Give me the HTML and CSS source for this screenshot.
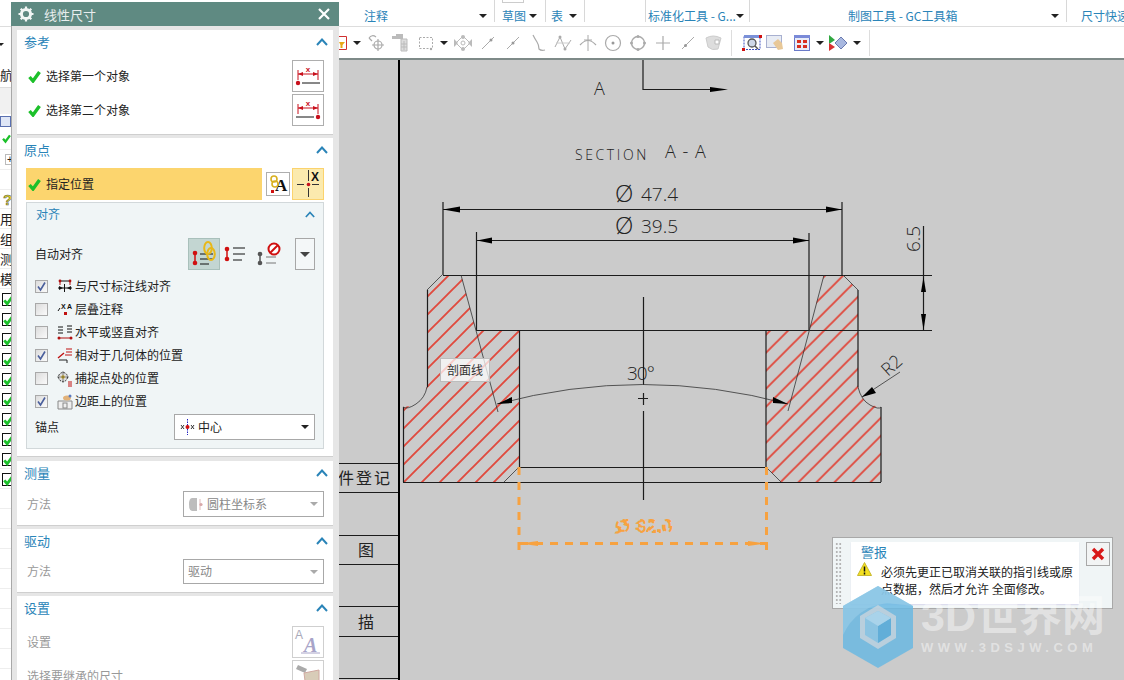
FILE: index.html
```html
<!DOCTYPE html>
<html lang="zh">
<head>
<meta charset="utf-8">
<title>线性尺寸</title>
<link rel="stylesheet" href="styles.css">
</head>
<body>
<svg class="defs" aria-hidden="true">
  <symbol id="ok" viewBox="0 0 13 13"><path d="M1.5 7 L5 11 L11.5 2" fill="none" stroke="#1cc02a" stroke-width="3.4"/></symbol>
  <symbol id="chev" viewBox="0 0 12 8"><path d="M1 7 L6 1.5 L11 7" fill="none" stroke="#2a84b8" stroke-width="2"/></symbol>
  <symbol id="tick" viewBox="0 0 13 13"><path d="M3 6.5 L5.5 10 L10 2.5" fill="none" stroke="#4a5f9c" stroke-width="1.6"/></symbol>
  <pattern id="hatchL" width="18" height="18" patternUnits="userSpaceOnUse" patternTransform="translate(4 0)"><path d="M-2 2L2 -2M0 18L18 0M16 20L20 16" stroke="#e04a3e" stroke-width="1.9"/></pattern>
  <pattern id="hatchR" width="18" height="18" patternUnits="userSpaceOnUse" patternTransform="translate(2.7 0)"><path d="M-2 2L2 -2M0 18L18 0M16 20L20 16" stroke="#e04a3e" stroke-width="1.9"/></pattern>
</svg>
<div class="app">
  <nav class="nav">
    <div class="n n-top"></div>
    <div class="n n-drop"><i class="n-arrow"></i><i class="n-sep"></i></div>
    <div class="n n-text n-27">航</div>
    <div class="n n-grey"></div>
    <div class="n n-blue"><i class="n-bluebox"></i></div>
    <div class="n n-22"><svg class="n-c" width="10" height="13"><use href="#ok"/></svg></div>
    <div class="n n-20"><span class="n-plus">+</span></div>
    <div class="n n-20"></div>
    <div class="n n-19"><span class="n-q">?</span></div>
    <div class="n n-text n-20">用</div>
    <div class="n n-text n-20">组</div>
    <div class="n n-text n-20">测</div>
    <div class="n n-text n-20">模</div>
    <div class="n n-20 n-chk"><span class="n-box"><svg width="11" height="12"><use href="#ok"/></svg></span></div>
    <div class="n n-20 n-chk"><span class="n-box"><svg width="11" height="12"><use href="#ok"/></svg></span></div>
    <div class="n n-20 n-chk"><span class="n-box"><svg width="11" height="12"><use href="#ok"/></svg></span></div>
    <div class="n n-20 n-chk"><span class="n-box"><svg width="11" height="12"><use href="#ok"/></svg></span></div>
    <div class="n n-20 n-chk"><span class="n-box"><svg width="11" height="12"><use href="#ok"/></svg></span></div>
    <div class="n n-20 n-chk"><span class="n-box"><svg width="11" height="12"><use href="#ok"/></svg></span></div>
    <div class="n n-20 n-chk"><span class="n-box"><svg width="11" height="12"><use href="#ok"/></svg></span></div>
    <div class="n n-20 n-chk"><span class="n-box"><svg width="11" height="12"><use href="#ok"/></svg></span></div>
    <div class="n n-20 n-chk"><span class="n-box"><svg width="11" height="12"><use href="#ok"/></svg></span></div>
    <div class="n n-20 n-chk"><span class="n-box"><svg width="11" height="12"><use href="#ok"/></svg></span></div>
    <div class="n n-20"></div><div class="n n-20"></div><div class="n n-20"></div><div class="n n-20"></div>
    <div class="n n-20"></div><div class="n n-20"></div><div class="n n-20"></div><div class="n n-20"></div>
    <div class="n n-20"></div>
  </nav>

  <aside class="dialog">
    <header class="dlg-head">
      <svg class="dlg-gear" width="16" height="16" viewBox="0 0 16 16"><circle cx="8" cy="8" r="4.6" fill="none" stroke="#f2f6f5" stroke-width="3"/><path d="M8 0.5V3M8 13V15.5M0.5 8H3M13 8H15.5M2.7 2.7L4.4 4.4M11.6 11.6L13.3 13.3M13.3 2.7L11.6 4.4M4.4 11.6L2.7 13.3" stroke="#f2f6f5" stroke-width="2.2"/></svg>
      <span class="dlg-title">线性尺寸</span>
      <svg class="dlg-close" width="12" height="12" viewBox="0 0 12 12"><path d="M1 1L11 11M11 1L1 11" stroke="#fff" stroke-width="2.2"/></svg>
    </header>
    <div class="dlg-body">
      <section class="sec sec-ref">
        <div class="sec-head"><span>参考</span><svg width="12" height="8"><use href="#chev"/></svg></div>
        <div class="rows">
          <div class="pick">
            <svg class="pick-ok" width="13" height="13"><use href="#ok"/></svg><span class="pick-label">选择第一个对象</span>
            <span class="btn32"><svg width="30" height="30" viewBox="0 0 30 30"><path d="M5 9V19M25 9V19M5 13H25" stroke="#c8101c" fill="none"/><path d="M5 13L10 11V15ZM25 13L20 11V15Z" fill="#c8101c"/><text class="svgx" x="15" y="11">x</text><path d="M9 22H27" stroke="#111"/><circle cx="5" cy="22" r="2.2" fill="#c8101c"/></svg></span>
          </div>
          <div class="pick">
            <svg class="pick-ok" width="13" height="13"><use href="#ok"/></svg><span class="pick-label">选择第二个对象</span>
            <span class="btn32"><svg width="30" height="30" viewBox="0 0 30 30"><path d="M5 9V19M25 9V19M5 13H25" stroke="#c8101c" fill="none"/><path d="M5 13L10 11V15ZM25 13L20 11V15Z" fill="#c8101c"/><text class="svgx" x="15" y="11">x</text><path d="M3 22H21" stroke="#111"/><circle cx="25" cy="22" r="2.2" fill="#c8101c"/></svg></span>
          </div>
        </div>
      </section>

      <section class="sec sec-origin">
        <div class="sec-head"><span>原点</span><svg width="12" height="8"><use href="#chev"/></svg></div>
        <div class="origin-row">
          <div class="hl"><svg class="pick-ok" width="13" height="13"><use href="#ok"/></svg><span class="pick-label">指定位置</span></div>
          <span class="btn24"><svg width="22" height="22" viewBox="0 0 22 22"><text class="svgA" x="8" y="18">A</text><circle cx="7" cy="6" r="3" fill="none" stroke="#d8b020" stroke-width="1.6"/><circle cx="8" cy="11" r="3" fill="none" stroke="#d8b020" stroke-width="1.6"/><rect x="4" y="17" width="3" height="3" fill="#d01010"/></svg></span>
          <span class="btn32 btn-on"><svg width="30" height="30" viewBox="0 0 30 30"><path d="M4 15.500H11M19 15.500H26M15.500 1V12M15.500 19V28" stroke="#333"/><circle cx="15.500" cy="15.500" r="1.800" fill="#c8101c"/><text class="svgX" x="22" y="12">X</text></svg></span>
        </div>
        <div class="panel">
          <div class="panel-head"><span>对齐</span><svg width="10" height="7"><use href="#chev"/></svg></div>
          <div class="auto">
            <span class="auto-label">自动对齐</span>
            <span class="auto-on"><svg width="30" height="30" viewBox="0 0 30 30"><path d="M6 14V24" stroke="#d01010" stroke-width="1.500"/><circle cx="6" cy="14" r="2.300" fill="#d01010"/><circle cx="6" cy="24" r="2.300" fill="#d01010"/><path d="M11 15H24M11 20H24M11 25H20" stroke="#111"/><ellipse cx="19" cy="9" rx="3.800" ry="6" fill="none" stroke="#e8b818" stroke-width="2"/><ellipse cx="22" cy="15" rx="3.800" ry="6" fill="none" stroke="#e8b818" stroke-width="2"/></svg></span>
            <span class="auto-ic auto-w30"><svg width="22" height="18" viewBox="0 0 22 18"><path d="M3 4V14" stroke="#d01010" stroke-width="1.500"/><circle cx="3" cy="4" r="2.300" fill="#d01010"/><circle cx="3" cy="14" r="2.300" fill="#d01010"/><path d="M9 3H21M9 9H21M9 15H18" stroke="#111"/></svg></span>
            <span class="auto-ic auto-w40"><svg width="26" height="24" viewBox="0 0 26 24"><path d="M3 12V21" stroke="#555" stroke-width="1.500"/><circle cx="3" cy="12" r="2.300" fill="#555"/><circle cx="3" cy="21" r="2.300" fill="#555"/><path d="M9 15H19M9 21H19" stroke="#777"/><circle cx="17" cy="7" r="5.500" fill="#fff" stroke="#d01010" stroke-width="2"/><path d="M13 11L21 3" stroke="#d01010" stroke-width="2"/></svg></span>
            <span class="auto-drop"><i class="tri"></i></span>
          </div>
          <ul class="checks">
            <li class="chk"><span class="box"><svg width="13" height="13"><use href="#tick"/></svg></span><svg class="chk-ic" width="16" height="16" viewBox="0 0 16 16"><path d="M3 2H13M1 9H15" stroke="#111"/><path d="M3 2V6M13 2V6" stroke="#b01010"/><circle cx="3" cy="2" r="1.400" fill="#b01010"/><circle cx="13" cy="2" r="1.400" fill="#b01010"/><path d="M6 9L2 7V11ZM10 9L14 7V11Z" fill="#111"/><path d="M7.500 5V13" stroke="#111"/></svg><span class="chk-t">与尺寸标注线对齐</span></li>
            <li class="chk"><span class="box"></span><svg class="chk-ic" width="16" height="16" viewBox="0 0 16 16"><path d="M1 9L3 6" stroke="#111"/><text class="svgs" x="4" y="7">X</text><text class="svgs" x="10" y="7">A</text><rect x="7" y="10" width="3" height="3" fill="#c01010"/></svg><span class="chk-t">层叠注释</span></li>
            <li class="chk"><span class="box"></span><svg class="chk-ic" width="16" height="16" viewBox="0 0 16 16"><path d="M1 2H6M1 5H6M1 8H6M10 1H15M10 4H15M10 7H15" stroke="#111"/><path d="M2 13H14" stroke="#b01010"/><circle cx="2" cy="13" r="1.500" fill="#b01010"/><circle cx="14" cy="13" r="1.500" fill="#b01010"/></svg><span class="chk-t">水平或竖直对齐</span></li>
            <li class="chk"><span class="box"><svg width="13" height="13"><use href="#tick"/></svg></span><svg class="chk-ic" width="16" height="16" viewBox="0 0 16 16"><path d="M9 1H15M9 4H15M8 7H15" stroke="#c01010"/><path d="M1 10L7 5" stroke="#c01010" stroke-width="1.400"/><path d="M2 12H10V15" stroke="#222" fill="none"/></svg><span class="chk-t">相对于几何体的位置</span></li>
            <li class="chk"><span class="box"></span><svg class="chk-ic" width="16" height="16" viewBox="0 0 16 16"><circle cx="6" cy="6" r="4.500" fill="#ddd" stroke="#333" stroke-dasharray="2 1"/><circle cx="6" cy="6" r="1.800" fill="#e8c020"/><path d="M6 0V12M0 6H12" stroke="#444" stroke-width=".6"/><path d="M11 11H15M11 13H15M11 15H15" stroke="#c01010"/></svg><span class="chk-t">捕捉点处的位置</span></li>
            <li class="chk"><span class="box"><svg width="13" height="13"><use href="#tick"/></svg></span><svg class="chk-ic" width="16" height="16" viewBox="0 0 16 16"><path d="M1 7H15V15H1Z" fill="#eee" stroke="#888"/><rect x="6" y="9" width="4" height="5" fill="none" stroke="#888"/><ellipse cx="10" cy="4" rx="4" ry="2.500" fill="#e2b27a"/><circle cx="13" cy="2" r="1.500" fill="#5a7ac0"/></svg><span class="chk-t">边距上的位置</span></li>
          </ul>
          <div class="anchor">
            <span class="anchor-label">锚点</span>
            <div class="select"><svg class="sel-ic" width="15" height="16" viewBox="0 0 15 16"><path d="M7.500 0V16" stroke="#2020c0" stroke-dasharray="1.500 1"/><circle cx="7.500" cy="8" r="2" fill="#d01010"/><path d="M1 6L4 10M4 6L1 10M11 6L14 10M14 6L11 10" stroke="#333"/></svg><span class="sel-t">中心</span><i class="tri tri-sel"></i></div>
          </div>
        </div>
      </section>

      <section class="sec sec-meas">
        <div class="sec-head"><span>测量</span><svg width="12" height="8"><use href="#chev"/></svg></div>
        <div class="field">
          <span class="field-label">方法</span>
          <div class="select select-off"><svg class="sel-ic" width="15" height="15" viewBox="0 0 15 15"><path d="M3 1H8V14H3Q0 14 0 7.500Q0 1 3 1Z" fill="#bdbdbd"/><path d="M11 2V13" stroke="#e0bcbc"/><circle cx="12" cy="7.500" r="1.600" fill="#d8a8a8"/></svg><span class="sel-t">圆柱坐标系</span><i class="tri tri-sel tri-off"></i></div>
        </div>
      </section>

      <section class="sec sec-drive">
        <div class="sec-head"><span>驱动</span><svg width="12" height="8"><use href="#chev"/></svg></div>
        <div class="field">
          <span class="field-label">方法</span>
          <div class="select select-off select-plain"><span class="sel-t">驱动</span><i class="tri tri-sel tri-off"></i></div>
        </div>
      </section>

      <section class="sec">
        <div class="sec-head"><span>设置</span><svg width="12" height="8"><use href="#chev"/></svg></div>
        <div class="set">
          <span class="field-label">设置</span>
          <span class="btn32 btn-off"><svg width="30" height="30" viewBox="0 0 30 30"><text class="svgAa" x="2" y="12">A</text><text class="svgAb" x="11" y="25">A</text><path d="M8 26H27" stroke="#a8a4c8"/></svg></span>
        </div>
        <div class="set set-2">
          <span class="field-label">选择要继承的尺寸</span>
          <span class="btn32 btn-off"><svg width="30" height="30" viewBox="0 0 30 30"><path d="M5 4L14 8L12 12L3 8Z" fill="#aaa"/><path d="M11 12L26 9V28H13Z" fill="#d8ccb8" stroke="#d0a8a0"/></svg></span>
        </div>
      </section>
    </div>
  </aside>

  <main class="main">
    <div class="ribbon">
      <div class="rg rg-a"><span>注释</span><i class="tri"></i></div>
      <div class="rg rg-b"><span class="rg-stub"></span><span>草图</span><i class="tri"></i></div>
      <div class="rg rg-c"><span>表</span><i class="tri"></i></div>
      <div class="rg rg-d"></div>
      <div class="rg rg-e"><span>标准化工具 - G...</span><i class="tri"></i></div>
      <div class="rg rg-f"><span>制图工具 - GC工具箱</span><i class="tri"></i></div>
      <div class="rg rg-g"><span>尺寸快速</span></div>
    </div>
    <div class="tools">
      <span class="t t-filter"><svg width="8" height="14" viewBox="0 0 8 14"><path d="M0 .500H7.500V13.500H0" fill="#fff" stroke="#d03030"/><path d="M0 6H6L3.500 9V12H1.500V9Z" fill="#e8a818"/></svg></span>
      <span class="t t-19"><i class="tri"></i></span>
      <span class="t t-22"><svg width="20" height="20" viewBox="0 0 20 20"><g fill="none" stroke="#aaa" stroke-width="1.200"><path d="M2 5Q5 1 9 4"/><path d="M2 5L5 8"/><circle cx="11" cy="12" r="4"/><path d="M11 6V18M5 12H17"/></g></svg></span>
      <span class="t t-25"><svg width="20" height="20" viewBox="0 0 20 20"><g fill="#bbb"><rect x="1" y="3" width="7" height="3"/><rect x="5" y="1" width="7" height="5"/></g><path d="M10 6H16V18H10Z" fill="#ddd" stroke="#bbb"/><path d="M13 8V17M10 11H16M10 14H16" stroke="#bbb"/></svg></span>
      <span class="t t-25"><svg width="18" height="16" viewBox="0 0 18 16"><rect x="2.500" y="2.500" width="13" height="11" fill="none" stroke="#aaa" stroke-dasharray="2 1.500"/><circle cx="14" cy="14" r="1.200" fill="#aaa"/></svg></span>
      <span class="t t-12"><i class="tri"></i></span>
      <span class="t t-25"><svg width="18" height="18" viewBox="0 0 18 18"><path d="M9 2L16 9L9 16L2 9Z" fill="none" stroke="#bbb"/><circle cx="9" cy="3" r="2" fill="#bbb"/><circle cx="9" cy="15" r="2" fill="#bbb"/><path d="M0 5V13L4 9ZM18 5V13L14 9Z" fill="#bbb"/><circle cx="9" cy="9" r="2" fill="none" stroke="#bbb"/></svg></span>
      <span class="t t-25"><svg width="14" height="14" viewBox="0 0 14 14"><path d="M1 13L13 1" stroke="#aaa"/><circle cx="10" cy="4" r="1.500" fill="#999"/></svg></span>
      <span class="t t-25"><svg width="14" height="14" viewBox="0 0 14 14"><path d="M1 13L13 1" stroke="#aaa"/><circle cx="7" cy="7" r="1.500" fill="#999"/></svg></span>
      <span class="t t-25"><svg width="16" height="18" viewBox="0 0 16 18"><path d="M3 1Q5 5 7 8T9 15Q11 17 15 16" fill="none" stroke="#aaa" stroke-width="1.200"/></svg></span>
      <span class="t t-25"><svg width="18" height="18" viewBox="0 0 18 18"><path d="M1 13L6 3L11 15L17 6" fill="none" stroke="#aaa"/><path d="M2 9H16" stroke="#ccc"/><circle cx="6" cy="3" r="1.500" fill="#aaa"/><circle cx="11" cy="15" r="1.500" fill="#aaa"/></svg></span>
      <span class="t t-25"><svg width="18" height="18" viewBox="0 0 18 18"><path d="M1 11Q9 2 17 11" fill="none" stroke="#aaa" stroke-width="1.200"/><path d="M9 1V17M5 6H13" stroke="#aaa"/></svg></span>
      <span class="t t-25"><svg width="18" height="18" viewBox="0 0 18 18"><circle cx="9" cy="9" r="7.500" fill="none" stroke="#aaa" stroke-width="1.200"/><circle cx="9" cy="9" r="1.500" fill="#999"/></svg></span>
      <span class="t t-25"><svg width="18" height="18" viewBox="0 0 18 18"><circle cx="9" cy="9" r="6.500" fill="none" stroke="#aaa" stroke-width="1.400"/><circle cx="9" cy="2.500" r="1.500" fill="#aaa"/><circle cx="2.500" cy="9" r="1.500" fill="#aaa"/><circle cx="15.500" cy="9" r="1.500" fill="#aaa"/><circle cx="9" cy="15.500" r="1.500" fill="#aaa"/></svg></span>
      <span class="t t-25"><svg width="14" height="14" viewBox="0 0 14 14"><path d="M7 0V14M0 7H14" stroke="#aaa" stroke-width="1.200"/></svg></span>
      <span class="t t-25"><svg width="14" height="14" viewBox="0 0 14 14"><path d="M1 13L13 1" stroke="#aaa"/><circle cx="4.500" cy="9.500" r="1.500" fill="#999"/></svg></span>
      <span class="t t-25"><svg width="18" height="16" viewBox="0 0 18 16"><path d="M2 3Q9 -1 17 3L14 14Q8 16 4 12Z" fill="#ddd" stroke="#ccc"/><path d="M11 5H15V9H11Z" fill="#fff" stroke="#bbb"/></svg></span>
      <i class="t-sep t-m6"></i>
      <span class="t t-20 t-m10"><svg width="20" height="18" viewBox="0 0 20 18"><rect x="2" y="1.500" width="16" height="14" fill="#fff" stroke="#3c50c0" stroke-dasharray="2 1"/><rect x="2" y="1" width="16" height="3" fill="#7a90d8"/><circle cx="10" cy="9" r="4" fill="#cfd8e8" stroke="#555" stroke-width="1.300"/><path d="M13 12L16 15" stroke="#555" stroke-width="1.500"/><rect x="17" y="1" width="3" height="3" fill="#d01010"/><rect x="0" y="14" width="3" height="3" fill="#d01010"/></svg></span>
      <span class="t t-20 t-m3"><svg width="20" height="18" viewBox="0 0 20 18"><rect x="1.500" y="1.500" width="15" height="12" fill="#e8ecf4" stroke="#a8b0d0"/><path d="M8 9L13 5L17 9L18 15L13 16Z" fill="#e8c898"/></svg></span>
      <span class="t t-20 t-m7"><svg width="16" height="16" viewBox="0 0 16 16"><rect x=".5" y=".5" width="15" height="15" fill="#e8ecf8" stroke="#6a7ac8"/><rect x="0" y="0" width="16" height="3" fill="#7a8ad8"/><g fill="#d83020"><rect x="3" y="5" width="4" height="3"/><rect x="9" y="5" width="4" height="3"/><rect x="3" y="10" width="4" height="3"/><rect x="9" y="10" width="4" height="3"/></g></svg></span>
      <span class="t t-12 t-m2"><i class="tri"></i></span>
      <span class="t t-20 t-m2"><svg width="20" height="18" viewBox="0 0 20 18"><path d="M1 1L7 6L1 10Z" fill="#30a840"/><path d="M1 9L7 13L1 17Z" fill="#d83030"/><path d="M7 9L13 3L19 9L13 15Z" fill="#a8b8e0" stroke="#6a7ab0"/></svg></span>
      <span class="t t-12 t-m3"><i class="tri"></i></span>
      <i class="t-sep t-m6"></i>
    </div>
    <div class="canvas">
      <svg class="drawing" width="785" height="620" viewBox="339 60 785 620">
        <g class="ln">
          <path class="frame" d="M399 60V680"/>
          <path d="M339 463.500H398M339 492.500H398M339 535.500H398M339 564.500H398M339 606.500H398M339 636.500H398M339 678.500H398"/>
        </g>
        <text class="cn" x="320" y="484">用件登记</text>
        <text class="cn1" x="358" y="556">图</text>
        <text class="cn1" x="358" y="628">描</text>

        <text class="dt dt-a" x="594" y="95">A</text>
        <path class="ln" d="M643 60V89.500H712" />
        <polygon points="710,87 728,89.500 710,92"/>
        <text class="dt dt-s" x="575" y="160">SECTION</text>
        <text class="dt dt-a" x="665" y="158">A - A</text>

        <text class="dt dt-phi" x="615" y="202">Ø</text><text class="dt dt-d" x="641" y="201">47.4</text>
        <text class="dt dt-phi" x="615" y="234">Ø</text><text class="dt dt-d" x="641" y="233">39.5</text>
        <g transform="translate(920 252) rotate(-90)"><text class="dt dt-d" x="0" y="0">6.5</text></g>
        <text class="dt dt-d30" x="627" y="380">30°</text>
        <g transform="translate(888 377) rotate(-42)"><text class="dt dt-r" x="0" y="0">R2</text></g>

        <polygon class="hatch-l" points="442,275 461,275 476,330 519,330 519,467 504,482 403,482 403,407 416,405 423,398 427,387 427,290"/>
        <polygon class="hatch-r" points="824,275 843,275 858,290 858,387 864,400 870,405 881,407 881,482 781,482 766,467 766,330 809,330"/>

        <g class="ln">
          <path d="M443 202V275M842 202V275M476.500 232V330M809 233V330"/>
          <path d="M443 209.500H842M476 240.500H809"/>
          <path d="M443 275.500H932M476 330.500H932"/>
          <path d="M923.500 226V330"/>
          <path d="M519.500 330V467M766 330V467"/>
          <path d="M403.500 407V482M881 407V482M427.500 290V387M858 290V387"/>
          <path d="M403 482.500H881M519 467.500H766"/>
          <path d="M643.500 297V385M643.500 393V405M638 398.500H648M643.500 411V500"/>
        </g>
        <g class="thin">
          <path d="M442 275L427 290M843 275L858 290M519 467L504 482M766 467L781 482"/>
          <path d="M427 387Q425 398 416 404T403 407M858 387Q861 400 870 405T881 407"/>
          <path d="M461 275L498 412M824 275L788 411"/>
          <path d="M497 404Q643 365 788 404"/>
          <path d="M862 397L900 372"/>
        </g>
        <polygon points="443,209.500 460,206.500 460,212.500"/>
        <polygon points="842,209.500 826,206.500 826,212.500"/>
        <polygon points="477,240.500 492,237.500 492,243.500"/>
        <polygon points="809,240.500 793,237.500 793,243.500"/>
        <polygon points="923.500,277 921,292 926,292"/>
        <polygon points="923.500,330 921,314 926,314"/>
        <polygon points="497,404 512,397 512,403"/>
        <polygon points="788,404 773,397 773,403"/>
        <polygon points="862,397 872,387 876,393"/>

        <path class="dash" d="M519 467V552M766.500 467V552M520 543.500H766"/>
        <polygon class="dash-a" points="520,543.500 538,541 538,546"/>
        <polygon class="dash-a" points="766,543.500 748,541 748,546"/>
        <text class="dt-o" x="616" y="532">Ø 32.0</text>
      </svg>

      <div class="tip">剖面线</div>

      <div class="alert">
        <span class="grip"></span>
        <div class="alert-box">
          <div class="alert-title">警报</div>
          <div class="alert-body">
            <svg class="warn" width="15" height="14" viewBox="0 0 15 14"><path d="M7.500 .5L14.500 13.500H.5Z" fill="#f4e020" stroke="#c8b830"/><path d="M7.500 4.500V9.500M7.500 10.500V12.500" stroke="#111" stroke-width="1.500"/></svg>
            <p class="alert-text">必须先更正已取消关联的指引线或原点数据，然后才允许 全面修改。</p>
          </div>
        </div>
        <span class="alert-close"><svg width="14" height="14" viewBox="0 0 14 14"><path d="M2 2L12 12M12 2L2 12" stroke="#d81818" stroke-width="3.400"/></svg></span>
      </div>

      <div class="mark">
        <svg class="mark-logo" width="72" height="84" viewBox="0 0 72 84">
          <path d="M36 1L71 21V63L36 83L1 63V21Z" fill="#6bb8e2" fill-opacity=".85"/>
          <path d="M36 1L71 21L45 18Q14 22 1 50V21Z" fill="#9bcde8" fill-opacity=".6"/>
          <path d="M36 20L54 31V53L36 64L18 53V31Z" fill="#cfd6dc" fill-opacity=".75"/>
          <path d="M36 26L49 33V50L36 58L23 50V33Z" fill="#8cc4e2"/>
          <path d="M36 41L49 33V50L36 58Z" fill="#62aed8"/>
          <path d="M36 41L23 33L36 26L49 33Z" fill="#a9d3ea"/>
        </svg>
        <div class="mark-text">
          <div class="mark-big">3D世界网</div>
          <div class="mark-small">WWW.3DSJW.COM</div>
        </div>
      </div>
    </div>
  </main>
</div>
</body>
</html>
```

FILE: styles.css
```css
* { box-sizing: border-box; }
html, body { margin: 0; padding: 0; }
body {
  width: 1124px;
  height: 680px;
  overflow: hidden;
  background: #fff;
  font-family: "Noto Sans CJK SC", "Liberation Sans", sans-serif;
  font-size: 12px;
  color: #222;
}
i { display: block; font-style: normal; }
.defs { position: absolute; width: 0; height: 0; }
.app { display: flex; width: 1124px; height: 680px; overflow: hidden; }

.tri {
  display: block;
  width: 0;
  height: 0;
  border-left: 4px solid transparent;
  border-right: 4px solid transparent;
  border-top: 4px solid #222;
}

/* left navigator strip */
.nav { width: 11px; flex: none; overflow: hidden; background: #fff; }
.n { overflow: hidden; display: flex; align-items: center; }
.n-top { height: 27px; border-bottom: 1px solid #ddd; }
.n-drop { height: 34px; position: relative; }
.n-arrow { width: 0; height: 0; border-left: 3px solid transparent; border-right: 3px solid transparent; border-top: 3px solid #222; margin-left: -2px; }
.n-sep { width: 1px; height: 24px; background: #ccc; margin-left: 7px; }
.n-text { font-size: 13px; line-height: 1; white-space: nowrap; color: #222; border-bottom: 1px solid #f0f0f0; }
.n-27 { height: 27px; border-bottom: 1px solid #ddd; }
.n-grey { height: 26px; background: #f1f1f1; }
.n-blue { height: 14px; }
.n-bluebox { width: 11px; height: 11px; background: #dfe6f6; border: 1px solid #5a70b0; }
.n-22 { height: 22px; border-bottom: 1px solid #eee; }
.n-20 { height: 20px; flex: none; border-bottom: 1px solid #eee; }
.n-19 { height: 19px; border-bottom: 1px solid #eee; }
.n-chk { padding-top: 2px; }
.n-c { margin-left: 2px; }
.n-plus { display: block; width: 11px; border: 1px solid #bbb; font: 10px/9px "Liberation Sans", sans-serif; margin-left: 5px; padding-left: 1px; height: 11px; }
.n-q { font: bold 15px/1 "Liberation Sans", sans-serif; color: #e8d820; -webkit-text-stroke: .5px #555; margin-left: 3px; }
.n-box { display: block; width: 13px; height: 13px; border: 1px solid #111; margin-left: 2px; background: #fff; flex: none; }
.n-box svg { display: block; }

/* dialog */
.dialog { width: 328px; flex: none; padding-top: 2px; background: #fff; display: flex; flex-direction: column; }
.dlg-head { height: 24px; background: #5f8a82; display: flex; align-items: center; padding: 0 9px 0 7px; flex: none; }
.dlg-gear { flex: none; }
.dlg-title { margin-left: 10px; font-size: 13px; color: #e8eeee; letter-spacing: 0; }
.dlg-close { margin-left: auto; }
.dlg-body { flex: 1; background: #e6e6e6; border-left: 1px solid #a8a8a8; padding: 4px 6px 0 5px; overflow: hidden; }
.sec { background: #fff; padding: 0 9px; border-bottom: 1px solid #cfcfcf; margin-bottom: 3px; }
.sec-ref { height: 105px; }
.sec-origin { height: 319px; margin-bottom: 4px; }
.sec-meas { height: 65px; }
.sec-drive { height: 64px; }
.sec-head { height: 26px; display: flex; align-items: center; justify-content: space-between; color: #2a84b8; font-size: 13px; margin-left: -2px; margin-right: -4px; padding-bottom: 2px; }
.sec-head span { padding-bottom: 2px; }
.sec-head svg { display: block; }
.rows { margin-top: 3px; }
.pick { height: 34px; display: flex; align-items: center; }
.pick .btn32 { margin-left: auto; }
.pick-ok { margin-left: 2px; flex: none; }
.pick-label { margin-left: 5px; color: #222; padding-bottom: 2px; }
.btn32 { width: 32px; height: 32px; border: 1px solid #aeaeae; background: #fff; display: block; flex: none; }
.btn32 svg, .btn24 svg { display: block; }
.svgx { font: bold 8px "Liberation Sans", sans-serif; fill: #c8101c; text-anchor: middle; }
.svgX { font: bold 12px "Liberation Sans", sans-serif; fill: #111; text-anchor: middle; }
.svgA { font: bold 17px "Liberation Serif", serif; fill: #111; }
.svgs { font: bold 7px "Liberation Sans", sans-serif; fill: #111; }
.svgAa { font: 12px "Liberation Sans", sans-serif; fill: #a9a9b8; }
.svgAb { font: italic bold 20px "Liberation Serif", serif; fill: #a8a4c8; }
.btn24 { width: 24px; height: 24px; border: 1px solid #aeaeae; background: #fff; display: block; flex: none; margin-left: 4px; }
.origin-row { display: flex; align-items: center; margin-top: 4px; height: 32px; }
.hl { width: 236px; height: 32px; background: #fcd56e; display: flex; align-items: center; flex: none; }
.btn-on { background: #fbeaae; border-color: #fbd36d; margin-left: 2px; }
.btn-off { border-color: #cfcfcf; }

.panel { margin-top: 2px; height: 247px; background: #f0f5f6; border: 1px solid #d2d8da; padding: 0 8px; }
.panel-head { height: 24px; display: flex; align-items: center; justify-content: space-between; color: #2a84b8; font-size: 12px; padding: 0 1px 2px 1px; }
.panel-head span { padding-bottom: 2px; }
.panel-head svg { display: block; margin-right: -1px; }
.auto { display: flex; align-items: center; height: 32px; margin-top: 11px; }
.auto-label { width: 153px; flex: none; padding-bottom: 2px; }
.auto-on { display: block; width: 32px; height: 32px; background: #c3d6d2; border: 1px solid #a9c0bb; flex: none; }
.auto-on svg { display: block; }
.auto-ic { display: flex; align-items: center; justify-content: center; flex: none; }
.auto-w30 { width: 30px; }
.auto-w40 { width: 40px; }
.auto-drop { display: flex; align-items: center; justify-content: center; width: 20px; height: 32px; border: 1px solid #a7a7a7; margin-left: 5px; background: #f4f7f8; }
.auto-drop .tri { border-left-width: 5px; border-right-width: 5px; border-top-width: 5px; border-top-color: #444; }
.checks { list-style: none; margin: 5px 0 0; padding: 0; }
.chk { height: 23px; display: flex; align-items: center; }
.chk-t { padding-bottom: 2px; }
.box { display: block; width: 13px; height: 13px; border: 1px solid #a9a9a9; background: linear-gradient(135deg, #dcdcdc, #fafafa); flex: none; }
.box svg { display: block; margin: -1px; }
.chk-ic { margin-left: 9px; margin-right: 2px; flex: none; }
.anchor { display: flex; align-items: center; height: 26px; margin-top: 1px; }
.anchor-label { width: 139px; flex: none; padding-bottom: 2px; }
.select { width: 141px; height: 26px; background: #fff; border: 1px solid #a8a8a8; display: flex; align-items: center; padding-left: 5px; flex: none; }
.sel-ic { flex: none; margin-right: 3px; }
.sel-t { padding-bottom: 2px; }
.tri-sel { margin-left: auto; margin-right: 5px; }
.tri-off { border-top-color: #aaa; }
.select-off { color: #888; }
.select-plain { height: 25px; padding-left: 4px; }
.field { display: flex; align-items: center; margin-top: 4px; }
.field-label { color: #999; padding-left: 1px; padding-bottom: 2px; flex: 1; }
.set { display: flex; align-items: center; margin-top: 4px; }
.set-2 { margin-top: 2px; }

/* main column */
.main { flex: 1; min-width: 0; display: flex; flex-direction: column; }
.ribbon { height: 27px; flex: none; display: flex; border-bottom: 1px solid #ddd; color: #2a84b8; }
.rg { display: flex; align-items: flex-start; height: 22px; border-right: 1px solid #d8d8d8; padding-top: 8px; line-height: 16px; white-space: nowrap; flex: none; position: relative; }
.rg .tri { margin-left: auto; margin-top: 6px; }
.rg-a { width: 156px; padding-left: 25px; padding-right: 7px; }
.rg-b { width: 51px; padding-left: 7px; padding-right: 8px; }
.rg-c { width: 39px; padding-left: 5px; padding-right: 7px; }
.rg-d { width: 61px; }
.rg-e { width: 104px; padding-left: 2px; padding-right: 8px; }
.rg-f { width: 317px; padding-left: 98px; padding-right: 7px; }
.rg-g { flex: 1; padding-left: 14px; border-right: 0; min-width: 0; overflow: visible; }
.rg-stub { position: absolute; left: 7px; top: 0; width: 22px; height: 3px; border: 1px solid #ccc; border-top: 0; }

.tools { height: 33px; flex: none; display: flex; align-items: center; background: #fff; border-bottom: 2px solid #7e8a88; }
.t { display: flex; align-items: center; justify-content: center; flex: none; height: 24px; }
.t svg { display: block; }
.t-filter { width: 8px; }
.t-19 { width: 19px; }
.t-22 { width: 22px; }
.t-25 { width: 25px; }
.t-12 { width: 12px; }
.t-20 { width: 20px; }
.t-sep { width: 1px; height: 26px; background: #ddd; flex: none; }
.t-m2 { margin-left: 2px; }
.t-m3 { margin-left: 3px; }
.t-m6 { margin-left: 6px; }
.t-m7 { margin-left: 7px; }
.t-m10 { margin-left: 10px; }

.canvas { flex: 1; position: relative; background: #cbcbcb; overflow: hidden; }
.drawing { display: block; }
.ln { fill: none; stroke: #1c1c1c; stroke-width: 1.200; }
.frame { stroke: #000; stroke-width: 2; }
.thin { fill: none; stroke: #333; stroke-width: .8; }
.hatch-l { fill: url(#hatchL); }
.hatch-r { fill: url(#hatchR); }
.dt { font-family: "Open Sans", "Liberation Sans", sans-serif; font-weight: 300; fill: #222; }
.dt-a { font-size: 18px; letter-spacing: 1px; }
.dt-s { font-size: 14px; letter-spacing: 2.600px; }
.dt-d { font-size: 19px; }
.dt-phi { font-size: 24px; }
.dt-d30 { font-size: 19px; letter-spacing: -1px; }
.dt-r { font-size: 18px; }
.cn { font-size: 16px; letter-spacing: 2px; fill: #222; }
.cn1 { font-size: 16px; fill: #222; }
.dash { fill: none; stroke: #f7a240; stroke-width: 3; stroke-dasharray: 8 7; }
.dash-a { fill: #f7a240; }
.dt-o { font: 17px "Liberation Sans", sans-serif; letter-spacing: 1px; fill: none; stroke: #f7a240; stroke-width: 2; stroke-dasharray: 6 5; }

.tip { position: absolute; left: 101px; top: 298px; width: 50px; height: 24px; background: rgba(255, 255, 255, .72); border: 1px solid #bdbdbd; text-align: center; line-height: 22px; color: #333; }

.alert { position: absolute; left: 493px; top: 477px; width: 281px; height: 72px; background: #f0f5f6; border: 1px solid #a8a8a8; display: flex; padding: 4px 3px 4px 2px; }
.grip { width: 7px; flex: none; background-image: radial-gradient(#b4b4b4 1px, transparent 1.200px); background-size: 3.500px 4px; }
.alert-box { width: 228px; flex: none; margin-left: 9px; background: #fff; padding: 1px 0 0 6px; box-shadow: 0 1px 1px #dde; }
.alert-title { color: #2a84b8; font-size: 13px; line-height: 18px; padding-left: 4px; }
.alert-body { display: flex; align-items: flex-start; }
.warn { flex: none; margin-top: 1px; }
.alert-text { margin: 2px 0 0 9px; width: 194px; flex: none; line-height: 17px; color: #222; font-size: 12px; }
.alert-close { display: flex; align-items: center; justify-content: center; width: 24px; height: 24px; border: 1px solid #a8a8a8; background: #f2f4f4; margin-left: 7px; flex: none; }
.alert-close svg { display: block; }

.mark { position: absolute; left: 503px; top: 525px; display: flex; align-items: flex-start; pointer-events: none; }
.mark-logo { display: block; flex: none; }
.mark-text { margin-left: 7px; margin-top: 8px; color: rgba(255, 255, 255, .45); }
.mark-big { font: bold 43px/46px "Liberation Sans", "Noto Sans CJK SC", sans-serif; white-space: nowrap; }
.mark-small { font: bold 13px/16px "Liberation Sans", sans-serif; letter-spacing: 4.500px; white-space: nowrap; margin-top: 1px; }
```
